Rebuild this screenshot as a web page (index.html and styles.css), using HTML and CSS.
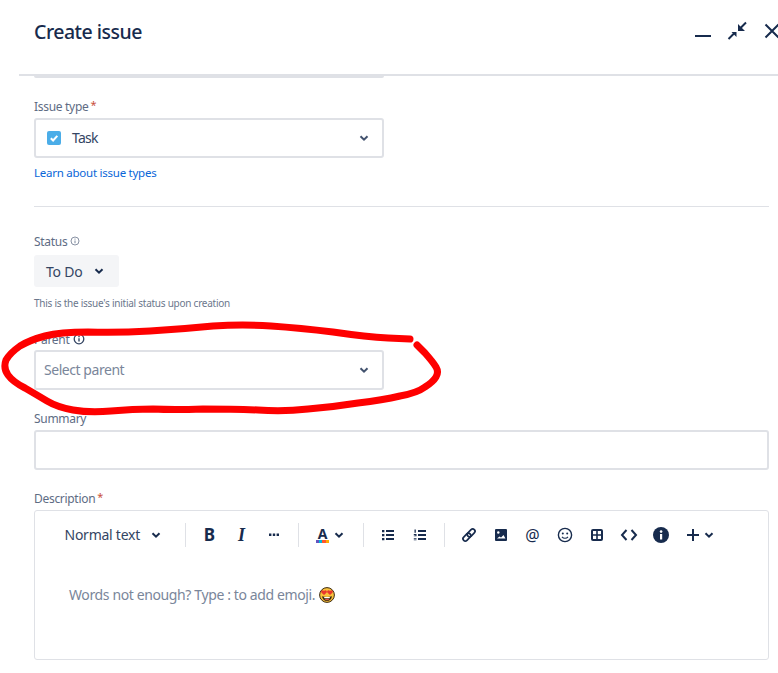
FILE: index.html
```html
<!DOCTYPE html>
<html lang="en">
<head>
<meta charset="utf-8">
<title>Create issue</title>
<link rel="stylesheet" href="styles.css">
</head>
<body>
<div class="page">
  <header class="header">
    <h1 class="title">Create issue</h1>
    <div class="win-actions">
      <svg class="i24" viewBox="0 0 24 24"><rect x="5" y="16" width="16" height="2" fill="#172b4d"/></svg>
      <svg class="i24" viewBox="0 0 24 24"><path d="M3.500 20L9 14.500M15 9.500L21 3.500" stroke="#172b4d" stroke-width="2" fill="none"/><path d="M6.500 13h5v5zM13 5v7h7z" fill="#172b4d"/></svg>
      <svg class="i24" viewBox="0 0 24 24"><path d="M5.500 5.500l13 13M18.500 5.500l-13 13" stroke="#172b4d" stroke-width="2" fill="none"/></svg>
    </div>
  </header>
  <main class="form">
    <div class="clip-bar"></div>

    <div class="label first">Issue type<span class="req">*</span></div>
    <div class="select narrow tall-gap">
      <svg class="task" viewBox="0 0 14 14"><rect width="14" height="14" rx="2" fill="#4bade8"/><path d="M3.800 7.200l2.300 2.300 4.200-4.700" stroke="#fff" stroke-width="2" fill="none"/></svg>
      <span class="value">Task</span>
      <svg class="chev" viewBox="0 0 12 12"><path d="M2.500 4.200L6 7.700l3.500-3.500" stroke="#42526e" stroke-width="2" fill="none"/></svg>
    </div>
    <a class="learn">Learn about issue types</a>
    <hr class="rule">

    <div class="label status-label">Status
      <svg class="info-sm" viewBox="0 0 10 10"><circle cx="5" cy="5" r="4" stroke="#7a869a" stroke-width=".9" fill="none"/><path d="M5 4.500v2.700M5 2.600v1" stroke="#7a869a" stroke-width="1"/></svg>
    </div>
    <button class="status-btn">To Do
      <svg class="chev" viewBox="0 0 12 12"><path d="M2.500 4.200L6 7.700l3.500-3.500" stroke="#172b4d" stroke-width="2" fill="none"/></svg>
    </button>
    <div class="helper">This is the issue's initial status upon creation</div>

    <div class="label parent-label">Parent
      <svg class="info-md" viewBox="0 0 12 12"><circle cx="6" cy="6" r="4.800" stroke="#344563" stroke-width="1.300" fill="none"/><path d="M6 5.300v3.200M6 3v1.300" stroke="#344563" stroke-width="1.400"/></svg>
    </div>
    <div class="select narrow parent-select">
      <span class="placeholder">Select parent</span>
      <svg class="chev" viewBox="0 0 12 12"><path d="M2.500 4.200L6 7.700l3.500-3.500" stroke="#42526e" stroke-width="2" fill="none"/></svg>
    </div>

    <div class="label gap20">Summary</div>
    <div class="select wide tall-gap"></div>

    <div class="label gap20">Description<span class="req">*</span></div>
    <div class="editor tall-gap">
      <div class="toolbar">
        <div class="tb-style">Normal text
          <svg class="chev" viewBox="0 0 12 12"><path d="M2.500 4.200L6 7.700l3.500-3.500" stroke="#172b4d" stroke-width="2" fill="none"/></svg>
        </div>
        <span class="sep"></span>
        <span class="tb tb-b">B</span>
        <span class="tb tb-i">I</span>
        <svg class="tb" viewBox="0 0 24 24"><path d="M7 10.500h2.400v2.400H7zM10.800 10.500h2.400v2.400h-2.400zM14.600 10.500H17v2.400h-2.400z" fill="#172b4d"/></svg>
        <span class="sep"></span>
        <span class="tb-color">
          <span class="color-a">A</span>
          <svg class="chev" viewBox="0 0 12 12"><path d="M2.500 4.200L6 7.700l3.500-3.500" stroke="#172b4d" stroke-width="2" fill="none"/></svg>
        </span>
        <span class="sep"></span>
        <svg class="tb" viewBox="0 0 24 24"><path d="M6 7h2.400v2.200H6zM6 11h2.400v2.200H6zM6 15h2.400v2.200H6zM10 7h8v2h-8zM10 11h8v2h-8zM10 15h8v2h-8z" fill="#172b4d"/></svg>
        <svg class="tb" viewBox="0 0 24 24"><path d="M10 7h8v2h-8zM10 11h8v2h-8zM10 15h8v2h-8zM6.500 6.500h1.300v3.200H6.500zM5.800 11h2.700v.9H5.800zM7.400 11h1.100v2H7.400zM5.800 12.400h2.700v.9H5.800zM5.800 15h2.700v.8H5.800zM5.800 16.500h2.700v.8H5.800z" fill="#172b4d"/></svg>
        <span class="sep"></span>
        <svg class="tb" viewBox="0 0 24 24"><g fill="none" stroke="#172b4d" stroke-width="1.700" transform="rotate(-45 12 12)"><rect x="4.500" y="9.700" width="9" height="4.600" rx="2.300"/><rect x="10.500" y="9.700" width="9" height="4.600" rx="2.300"/></g></svg>
        <svg class="tb" viewBox="0 0 24 24"><rect x="6" y="6" width="12" height="12" rx="1" fill="#172b4d"/><circle cx="9.300" cy="9.500" r="1.200" fill="#fff"/><path d="M8 15.500l2.500-2 1.500 1 2.500-2.500 2 3.500z" fill="#fff"/></svg>
        <span class="tb tb-at">@</span>
        <svg class="tb" viewBox="0 0 24 24"><circle cx="12" cy="12" r="6.600" fill="none" stroke="#172b4d" stroke-width="1.400"/><circle cx="9.800" cy="10.600" r="1" fill="#172b4d"/><circle cx="14.200" cy="10.600" r="1" fill="#172b4d"/><path d="M9 13.800c1.500 1.900 4.500 1.900 6 0" fill="none" stroke="#172b4d" stroke-width="1.200"/></svg>
        <svg class="tb" viewBox="0 0 24 24"><rect x="6" y="6" width="12" height="12" rx="2" fill="#172b4d"/><path d="M8 8h3.200v3.200H8zM12.800 8H16v3.200h-3.200zM8 12.800h3.200V16H8zM12.800 12.800H16V16h-3.200z" fill="#fff"/></svg>
        <svg class="tb" viewBox="0 0 24 24"><path d="M9.500 7L5 12l4.500 5M14.500 7l4.500 5-4.500 5" fill="none" stroke="#172b4d" stroke-width="2"/></svg>
        <svg class="tb" viewBox="0 0 24 24"><circle cx="12" cy="12" r="8" fill="#172b4d"/><rect x="11" y="11" width="2.200" height="5.500" fill="#fff"/><circle cx="12.100" cy="8.600" r="1.300" fill="#fff"/></svg>
        <span class="tb-plus">
          <svg class="i-plus" viewBox="0 0 14 14"><path d="M7 1v12M1 7h12" stroke="#172b4d" stroke-width="2" fill="none"/></svg>
          <svg class="chev" viewBox="0 0 12 12"><path d="M2.500 4.200L6 7.700l3.500-3.500" stroke="#172b4d" stroke-width="2" fill="none"/></svg>
        </span>
      </div>
      <div class="editor-body">Words not enough? Type : to add emoji.
        <svg class="emoji" viewBox="0 0 16 16"><circle cx="8" cy="8" r="7.400" fill="#f9c13c" stroke="#3a2a12" stroke-width="1"/><path d="M3 9.200c3 1 7 1 10 0-.4 3-2.400 4.800-5 4.800S3.400 12.200 3 9.200z" fill="#3a2a12"/><path d="M5 10h6l-.5 1.200h-5z" fill="#fff"/><path d="M5.500 12.300c1.500-.8 3.500-.8 5 0-1.500 1.200-3.500 1.200-5 0z" fill="#e8574c"/><path d="M5 8L2.300 5.400C1.500 3.800 3.800 2.500 5 4c1.200-1.500 3.500-.2 2.700 1.400zM11 8L8.300 5.400C7.500 3.800 9.800 2.500 11 4c1.200-1.500 3.500-.2 2.700 1.400z" fill="#e8372e"/></svg>
      </div>
    </div>
  </main>

  <svg class="scribble" viewBox="0 0 778 673"><path d="M410 339L388 338Q367 337 333 332Q300 328 271 326Q243 324 213 326Q183 329 150 331Q117 333 88 332Q60 332 45 336Q30 340 20 346Q10 353 6 360Q3 368 8 375Q13 382 25 388Q37 395 47 401Q57 407 73 410Q90 413 111 411Q133 409 153 409Q173 410 203 409Q233 409 258 410Q283 412 308 409Q333 407 358 403Q383 400 400 396Q417 393 425 387Q433 382 436 377Q439 372 436 367Q433 362 425 353L417 345" fill="none" stroke="#fe0000" stroke-width="7" stroke-linecap="round" stroke-linejoin="round"/></svg>
</div>
</body>
</html>
```

FILE: styles.css
```css
* { box-sizing: border-box; }
html, body { margin: 0; padding: 0; background: #fff; }
body {
  font-family: "Noto Sans", "Open Sans", "Liberation Sans", sans-serif;
  color: #172b4d;
  overflow: hidden;
}
.page { position: relative; width: 778px; height: 673px; overflow: hidden; }
.header {
  display: flex;
  align-items: center;
  justify-content: space-between;
  height: 76px;
  margin-left: 19px;
  padding: 0 0 12px 15px;
  border-bottom: 2px solid #dfe1e6;
}
.title { margin: 0; font-size: 19.500px; font-weight: 500; letter-spacing: -.5px; color: #172b4d; }
.win-actions { display: flex; gap: 11px; margin-right: -6px; }
.i24 { display: block; width: 24px; height: 24px; }
.form { padding: 0 9px 0 34px; }
.clip-bar { width: 350px; height: 2px; background: #dfe1e6; border-radius: 0 0 3px 3px; }
.label { display: flex; align-items: center; height: 16px; font-size: 12px; font-weight: 400; letter-spacing: -.3px; color: #5e6c84; }
.first { margin-top: 20px; }
.gap20 { margin-top: 20px; }
.req { align-self: flex-start; margin-left: 2px; font-size: 11px; line-height: 14px; color: #c9503c; }
.select {
  display: flex;
  align-items: center;
  height: 40px;
  padding: 0 12px 0 12px;
  background: #fff;
  border: 2px solid #dfe1e6;
  border-radius: 3px;
}
.narrow { width: 350px; }
.wide { width: 735px; }
.tall-gap { margin-top: 4px; }
.task { width: 14px; height: 14px; margin-left: -1px; }
.value { margin-left: 11px; padding-bottom: 2px; font-size: 14px; letter-spacing: -.7px; word-spacing: 0; color: #344563; }
.chev { display: block; width: 12px; height: 12px; flex: none; }
.select .chev { margin-left: auto; }
.learn { display: block; margin-top: 7px; height: 16px; line-height: 16px; font-size: 11.500px; letter-spacing: -.25px; color: #0a66d8; }
.rule { margin: 25px 0 0; height: 1px; border: 0; background: #dfe1e6; }
.status-label { margin-top: 26px; }
.info-sm { width: 10px; height: 10px; margin-left: 3px; margin-top: -1px; }
.status-btn {
  display: flex;
  align-items: center;
  gap: 10px;
  width: 85px;
  height: 32px;
  margin-top: 6px;
  padding: 0 0 0 12px;
  border: 0;
  border-radius: 3px;
  background: #f4f5f7;
  font: inherit;
  font-size: 14px;
  letter-spacing: -.2px;
  color: #344563;
}
.helper { margin-top: 8px; height: 16px; line-height: 16px; font-size: 10px; letter-spacing: -.25px; color: #6b778c; }
.parent-label { margin-top: 20px; }
.info-md { width: 12px; height: 12px; margin-left: 4px; }
.parent-select { margin-top: 3px; padding-left: 8px; }
.placeholder { padding-bottom: 2px; font-size: 14px; letter-spacing: -.45px; color: #7a869a; }
.editor {
  width: 735px;
  height: 150px;
  border: 1.500px solid #dfe1e6;
  border-radius: 3px;
}
.toolbar {
  display: flex;
  align-items: center;
  height: 24px;
  margin-top: 11.500px;
  padding-left: 29.500px;
}
.tb-style { display: flex; align-items: center; width: 120px; font-size: 14px; letter-spacing: -.25px; color: #344563; }
.tb-style .chev { margin-left: 10px; }
.sep { display: block; flex: none; width: 1px; height: 24px; margin-right: 12px; background: #dfe1e6; }
.tb {
  display: block;
  flex: none;
  width: 24px;
  height: 24px;
  margin-right: 8px;
  line-height: 24px;
  text-align: center;
  color: #172b4d;
}
.tb + .sep { margin-left: 4px; }
.tb-b { font-size: 17px; font-weight: 700; }
.tb-i { font-family: "Liberation Serif", serif; font-size: 18px; font-style: italic; font-weight: 700; }
.tb-at { font-size: 16px; font-weight: 400; }
.tb-color { display: flex; align-items: center; gap: 3.500px; width: 40px; margin-right: 12px; padding-left: 5.500px; }
.color-a {
  width: 13px;
  font-size: 14px;
  font-weight: 700;
  line-height: 13px;
  text-align: center;
  color: #172b4d;
  border-bottom: 3px solid;
  border-image: linear-gradient(90deg, #6554c0 0 25%, #00b8d9 25% 50%, #ff5630 50% 75%, #ffab00 75%) 1;
}
.tb-plus { display: flex; align-items: center; gap: 3px; padding-left: 5px; }
.i-plus { width: 14px; height: 14px; }
.editor-body {
  display: flex;
  align-items: center;
  gap: 4px;
  margin-top: 38px;
  padding-left: 34px;
  height: 20px;
  font-size: 14px;
  letter-spacing: -.38px;
  color: #7a869a;
}
.emoji { width: 16px; height: 16px; }
.scribble { position: absolute; inset: 0; width: 778px; height: 673px; pointer-events: none; }
```
